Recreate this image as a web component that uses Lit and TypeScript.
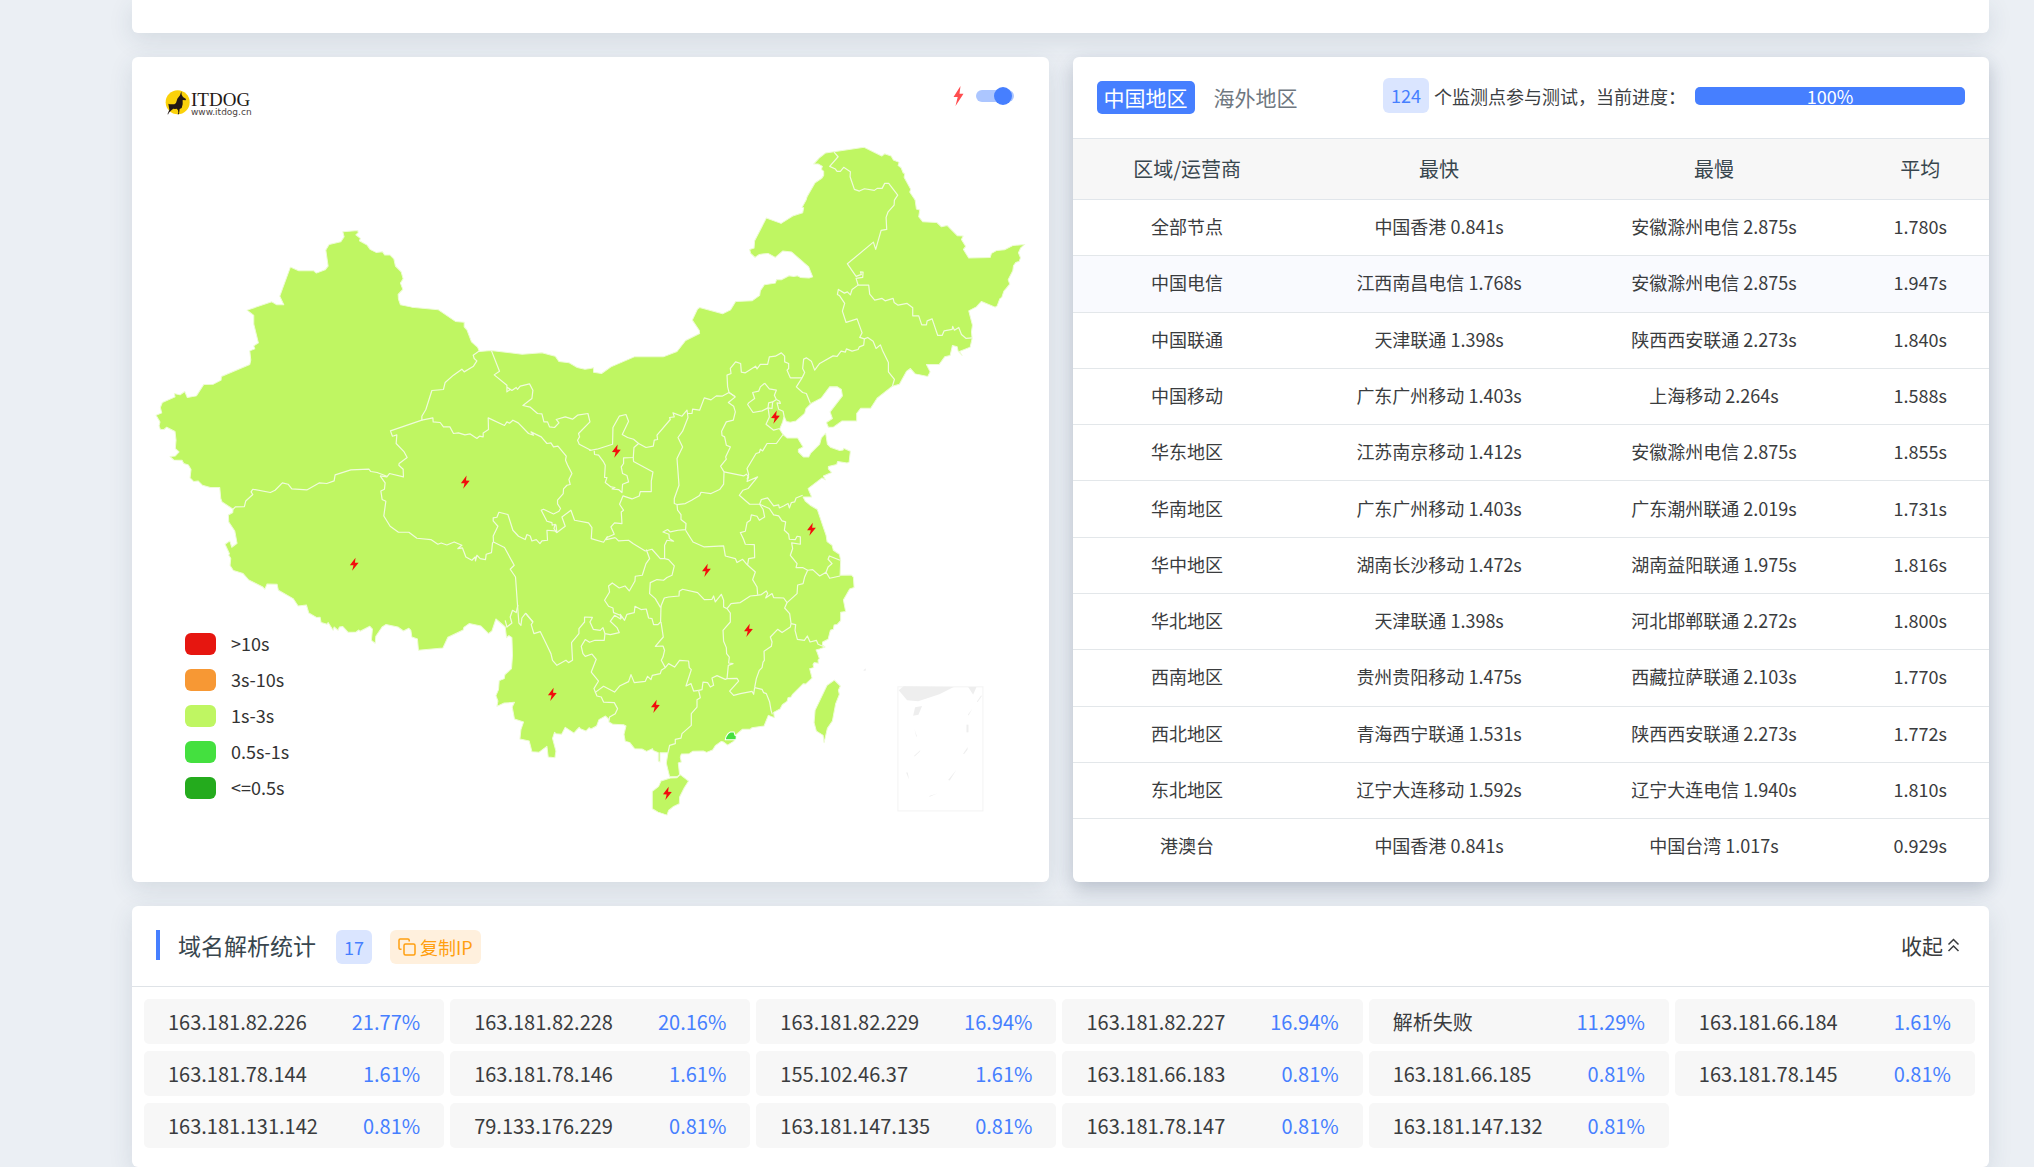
import { LitElement, html, svg, css } from "lit";
import { customElement, property, state } from "lit/decorators.js";

/* ---------- Map geometry ----------
   Survey sheets: each sheet has an origin in map units and its
   points are written in thirds of a unit, relative to that origin. */
const SHEETS = {
  A: [-2, -7],
  B: [428, 63],
  C: [198, 273],
  D: [-2, 383],
  E: [428, 383],
} as const;
type Sheet = keyof typeof SHEETS;

const place = (sheet: Sheet, points: string): string =>
  points
    .trim()
    .split(/\s+/)
    .map((pair) => {
      const [x, y] = pair.split(",").map(Number);
      const [ox, oy] = SHEETS[sheet];
      return `${(ox + x / 3).toFixed(1)},${(oy + y / 3).toFixed(1)}`;
    })
    .join(" ");

const MAINLAND = [
  place("A", `78,1095 95,1088 91,1072 97,1057 135,1040 133,1030 150,1034 164,1024 172,1042 199,1037 221,1003 250,1002 273,990 274,979
  359,943 362,930 359,902 374,896 371,887 385,878 371,822 371,796 351,780 425,755 440,764 461,764 449,738 481,651 506,662 551,662 559,669
  585,659 594,648 587,600 597,583 632,575 642,560 638,545 683,541 684,548 677,554 691,565 688,572 711,585 720,598 738,607 757,605 764,615
  780,615 791,626 796,648 813,665 819,686 811,699 818,718 804,733 805,747 811,764 845,771 925,779 976,814 1002,816 1002,830 1010,839
  1024,875 1042,891 1048,904 1082,901 1176,912 1235,908 1275,918 1286,934 1317,938 1341,952 1364,957 1380,955`),
  place("B", `100,743 100,756 124,760 152,740 222,710 309,710 350,694 376,661 418,640 417,631 396,600 411,568 418,562 487,581 511,569
  526,544 575,542 598,526 600,512 612,494 645,489 649,478 663,479 686,467 700,469 712,467 720,472 746,474 757,470 745,440 694,396 667,393
  645,412 623,400 597,403 584,412 571,400 568,388 581,384 583,362 618,294 662,310 697,288 727,278 730,263 725,262 737,240 740,230 764,188
  784,175 790,166 790,154 783,148 786,139 773,132 760,132 776,114 795,99 911,82 964,108 973,101 992,108 999,120 1016,127 1013,136 1022,143
  1028,158 1033,161 1031,172 1051,208 1048,216 1064,240 1068,267 1078,270 1075,290 1087,305 1129,307 1143,320 1160,316 1191,347 1208,348
  1203,358 1216,379 1209,388 1225,414 1289,412 1293,400 1309,391 1332,389 1358,376 1393,373 1381,383 1374,398 1380,413 1376,424 1366,427
  1359,437 1357,452 1343,479 1348,492 1330,514 1324,532 1318,536 1310,557 1304,561 1263,544 1248,560 1225,572 1236,615 1233,635 1235,655
  1229,681 1197,694 1205,706 1193,693 1190,680 1176,676 1169,706 1153,710 1136,733 1098,733 1109,755 1102,769 1064,761 1050,745 1038,754
  1017,792 996,798 950,834 931,864 901,864 889,880 889,902 845,902 820,920 804,921 798,907 816,895 809,875 846,827 843,808 831,800 808,800
  782,834 752,850 737,865 733,880 707,902 690,906 678,904 671,888 667,905 658,927 668,943 680,953 712,953 728,980 714,988 714,995 729,1010
  745,1010 751,999 778,972 783,953 796,939 801,972 810,981 838,991 848,989 850,984 870,993 866,1026 860,1028 832,1024 829,1033 804,1039
  804,1046 814,1057 789,1067`),
  place("E", `789,107 795,119 785,113 743,145 754,170 728,170 735,183 751,196 771,208 785,250 797,285 800,304 815,315 819,330 837,342
  841,360 839,405 873,404 879,411 881,442 868,446 849,479 856,514 841,516 841,541 830,553 821,554 819,567 810,570 803,597 787,605 786,614
  794,620 778,626 767,629 770,635 777,655 773,659 774,669 762,667 758,672 760,682 748,685 755,713 736,731 729,730 696,763 692,770 683,772
  680,783 666,793 659,806 640,816 642,832 624,825 611,857 575,862 569,867 546,867 525,885 525,897 520,903 502,914 490,905 483,903 465,916
  457,929 439,936 429,932 397,933 387,940 363,941 360,950 363,965 354,968 358,1003 352,1008 328,1009 318,968 323,937 299,937 299,965
  294,962 294,937 278,930 277,925 259,933 245,926 223,925 208,906 195,903 191,882 197,857 190,853 158,852 146,845 146,837 136,827 116,838
  109,857 92,866 87,862 77,872 60,865 57,861 50,868 41,878 15,861 4,882`),
  place("D", `1277,880 1273,876 1267,894 1277,932 1274,952 1254,950 1250,918 1226,936 1205,934 1197,902 1169,896 1172,868 1180,845
  1153,836 1146,800 1153,786 1122,788 1100,798 1103,782 1097,766 1105,748 1107,721 1122,715 1124,703 1144,685 1147,645 1145,592 1136,586
  1129,592 1125,560 1097,536 1085,572 1075,580 1052,557 1017,550 1001,561 999,569 953,591 938,623 865,630 862,596 845,590 842,570 836,564
  820,572 803,560 767,553 756,560 737,588 735,609 724,600 727,566 719,558 690,573 686,569 678,575 654,576 638,559 628,560 624,570 612,560
  609,570 594,547 591,552 573,547 570,531 560,532 536,518 529,494 504,497 489,475 445,450 441,432 411,431 404,447 398,440 356,419 339,400
  310,391 300,376 302,355 296,345 298,340 285,312 299,302 305,321 321,309 314,272 296,245 295,224 308,217 309,207 276,185 272,175 269,142
  241,142 217,135 204,122 191,124 180,113 183,88 175,74 161,70 156,60 131,59 120,49 136,47 147,35 136,25 138,0`),
  place("A", `135,1144 110,1131 102,1138 91,1137 87,1127 90,1115`),
].join(" ");

const HAINAN = place("E", `360,1003 385,1022 372,1042 358,1070 357,1090 340,1098 325,1110 320,1124 293,1115 276,1105 276,1053 295,1038 302,1022 330,1013 350,1012`);
const TAIWAN = place("E", `822,719 840,737 834,750 837,762 826,790 816,842 801,864 791,907 788,885 768,872 761,847 764,810 800,735`);
const HONGKONG = place("E", `495,898 497,889 503,880 510,875 521,875 524,885 528,887 527,898`);

const BORDERS: string[] = (
  [
    ["C", `448,62 429,75 432,85 440,92 430,108 402,125 395,117 370,135 345,157 340,178 305,181 287,238 275,258 275,270 181,302 187,318 200,314 198,340 222,365 231,382 207,400 206,405 219,417 220,440 178,430 170,440 150,437`],
    ["C", `275,270 308,263 309,275 330,277 340,290 359,290 370,310 385,308 404,314 420,311 440,325 448,318 459,320 459,308 475,298 474,263 523,286 530,275 538,279 548,270 564,278 595,310 610,315 602,305 633,320 650,340 662,338 670,350 683,348 708,378 706,390 712,404 725,430 716,448 720,463 710,465 700,476 699,490 682,510 682,521 691,535 686,543 670,551 640,537 633,540 650,573 665,577 666,585 675,582 671,595 680,607 677,583`],
    ["C", `680,607 674,602 650,600 652,630 635,632 629,640 618,628 605,632 600,617 590,613 585,628 565,618 548,600 533,553 506,546 500,561 489,563 489,572 503,588 489,617 490,635`],
    ["C", `150,437 165,458 163,477 152,482 156,508 167,513 161,557 180,588 205,606 236,606 260,624 302,628 323,642 333,638 350,644 372,635 395,645 383,655 397,653 407,680 425,690 435,680 436,692 440,675 450,685 466,688 468,672 484,667 487,638 490,635`],
    ["D", `309,207 316,200 343,199 347,182 368,163 363,155 368,147 421,157 435,150 457,128 474,132 485,146 530,149 567,128 590,130 612,122 615,104 662,89 716,87 722,94 741,97 770,108`],
    ["C", `490,635 523,652 552,705 540,717 556,740 562,825 566,878 572,885 575,863 586,849 608,875`],
    ["D", `1187,519 1208,545 1203,553 1211,580 1230,574 1250,615 1262,640 1267,660 1280,675 1307,660 1315,667 1327,660 1324,607 1346,580 1346,565 1363,545 1363,530 1387,531`],
    ["D", `1163,494 1158,517 1147,510 1140,530 1145,548 1130,560 1125,540`],
    ["C", `484,62 508,123 492,134 530,165 530,185 540,178 532,172 545,181 558,172 562,178 570,168 598,161 608,180 605,205 578,226 600,231 622,250 635,251 641,275 652,275 658,290 673,292 686,278 678,268 705,260 727,267 742,255 773,250 779,275 745,310 748,320 742,330 747,342 783,361`],
    ["C", `777,361 800,357 847,342 848,292 867,258 887,253 895,273 876,313 892,322 910,327 925,340 911,352 909,382 880,383 880,400 873,410 877,430 890,436 895,455 877,462 875,487 865,478 845,476 854,472 842,470 825,457 830,442 823,442 825,405 820,395 805,375 793,373 792,362`],
    ["C", `909,382 910,394 968,425 963,453 963,484 930,484 927,497 905,506 878,497 868,522 880,540 873,545 875,580 853,578 842,590 852,612 830,622 828,628 855,622`],
    ["C", `680,607 705,588 695,560 722,540 733,570 775,578 785,592 783,625 820,636 832,618`],
    ["C", `925,340 947,352 969,348 972,330 982,328 980,315 1020,268 1018,262 1032,260 1028,248 1055,258 1070,240 1073,262 1057,303 1043,322 1057,350 1040,385 1046,465 1032,505 1032,520 1040,523`],
    ["C", `1073,250 1085,250 1087,237 1108,240 1122,203 1142,209 1158,197 1175,198 1196,187`],
    ["C", `1196,187 1215,200 1194,217 1210,228 1215,245 1209,270 1188,275 1174,303 1175,316 1183,320 1188,345 1200,350 1186,380 1188,387 1171,408 1181,425 1180,462 1168,478 1142,490 1112,486 1108,496 1084,510 1065,520 1040,523`],
    ["C", `1040,523 1042,540 1052,553 1052,568 1067,580 1066,598 1043,600 1020,605 1012,598 998,605 1016,612 1017,625 1030,633 1010,630 1003,645 1003,685`],
    ["C", `855,622 865,632 895,630 908,640 945,662 965,657 990,685 1003,685 1015,688 1032,707 1025,735 1010,742 1000,750 980,748 960,757 958,790 975,805 991,832`],
    ["C", `948,658 958,685 947,700 936,735 915,738 914,752 897,782 884,767 867,773 846,758 835,767 838,785 823,810 835,828 848,833 850,847 870,855 872,864`],
    ["E", `183,535 180,522 193,540 200,522 222,517 224,498 242,508 258,506 265,533 275,535 280,553 293,553 301,545 302,498`],
    ["E", `97,531 89,545 99,567 120,570 128,562 134,580 150,583 177,577 170,562 150,543 163,525 182,537`],
    ["E", `134,580 132,600 104,600 88,606 75,598 63,618 68,640 75,648 95,641 108,657 93,695 115,722 101,745 110,767 123,770 130,785 162,787 172,805 165,820 148,830 146,840`],
    ["E", `104,757 130,738 163,755 178,737 205,724 212,703 222,727 255,723 262,708 272,718 276,705 300,700 303,690 315,682`],
    ["E", `301,500 312,473 325,470 356,467 357,453 367,447 412,457 432,478 455,477 460,467 465,485 483,462 490,480 490,500 500,505`],
    ["E", `302,545 309,590 285,618 308,617 313,630 308,650 303,660 315,682 325,670 343,680 358,660 385,662 387,682 393,688 377,737 392,730 400,752 415,750`],
    ["E", `415,750 425,748 428,725 442,727 450,740 460,735 455,713 470,706 495,717 500,715`],
    ["E", `500,505 510,518 510,545 488,570 490,603 498,622 499,640 507,650 505,668 518,670 504,675 500,715 530,714 535,722 508,752 520,765 540,760 575,753 580,762 583,742`],
    ["E", `583,742 605,747 610,757 618,760 628,785 632,810 636,822`],
    ["E", `583,742 588,715 597,690 605,682 608,665 612,660 611,633 633,618 635,605 630,590 652,567 665,577 690,560 692,550`],
    ["E", `500,505 512,490 540,487 570,467 588,465 603,463 618,452 622,460 616,473 635,460 640,472 670,473 680,487 673,503 688,520 692,550`],
    ["E", `692,550 706,553 704,570 711,597 732,600 741,587 749,605 768,600 773,612 793,620`],
    ["E", `680,487 710,460 712,434 728,430 733,410 742,390 727,382 707,382 710,370 690,345 697,325 694,308 720,312 720,290 710,288 705,298 687,297 685,282 672,270 676,245 665,242 655,227 640,224 627,205 598,192`],
    ["E", `742,390 757,388 778,407 797,396 808,414 839,407`],
    ["E", `797,396 803,380 815,370 803,357 807,347 839,360`],
    ["E", `598,192 603,178 622,173 640,197 655,194 657,203 670,197 683,190 687,203 693,187 703,185 707,173 727,165`],
    ["E", `491,95 550,107 558,102 565,110 560,124 592,110 563,145 548,150 537,165 568,192 598,192 608,207 613,230 597,240 590,228 573,224 570,240 560,247 555,273 540,277 550,298 555,312 582,313 583,352 565,355 562,373`],
    ["E", `560,118 565,103 560,85 587,40 597,37 600,27 607,32 620,10 648,10 668,-17`],
    ["E", `376,270 398,305 432,320 490,317 495,347 525,355 530,367 547,357 560,373 585,395 577,418 590,440 592,463`],
    ["E", `415,750 420,772 410,778 410,800 393,820 393,855 365,880 362,893 345,897 345,910 328,915 323,937`],
    ["B", `524,829 506,817 502,800 500,765 512,760 510,745 526,725 541,730 543,756 555,758 586,738 590,746 600,733 622,733 627,710 645,708 663,698 673,708 673,725 685,730 685,745 680,750 690,773 725,773`],
    ["B", `725,773 708,800 727,817 738,820 750,850`],
    ["B", `725,773 733,757 727,745 730,717 738,713 753,723 763,750 778,730 818,707 830,709 842,693 855,696 858,686 875,693 893,688 897,680 910,675 912,656 922,652 938,663 947,685 960,674 966,690 984,727 984,755 1002,778 996,798`],
    ["B", `912,656 898,652 905,638 890,596 857,607 846,573 853,550 838,527 831,523 834,508 852,519 861,515 870,524 875,508 893,495 925,495 928,522 943,540 965,535 974,542 998,535 1001,547 1013,555 1040,550 1057,563 1057,587 1075,587 1084,614 1098,614 1100,602 1115,596 1132,646 1145,646 1151,632 1175,628 1177,619 1182,630 1195,622 1203,643 1217,655 1235,653`],
    ["B", `893,495 887,475 907,472 908,456 900,455 903,463 887,469 861,431 939,366 946,388 962,331 979,328 977,292 983,275 1001,255 1002,240 1012,225 985,190 973,190 965,205 950,205 942,211 912,206 897,213 882,208 869,170 870,155 850,142 840,154 830,154 825,147 808,139 833,110 821,96`],
    ["B", `613,789 627,806 648,810 642,825 648,838 637,845 625,848 623,863 605,872 578,877 562,853 565,848 583,835 577,817 595,813 600,800 613,789`],
    ["B", `648,838 658,843 660,850 650,848 655,867 668,873 671,888`],
    ["B", `637,845 635,865 623,863 627,890 617,912 640,930 658,925`],
  ] as [Sheet, string][]
).map(([sheet, pts]) => place(sheet, pts));

const BOLTS: [number, number][] = [
  [643, 360], [484, 394], [222, 507], [333, 425], [420, 637],
  [679, 472], [574, 513], [616, 573], [523, 649], [535, 736],
];

const SEA_MARKS: string[] = [
  `1064,801 1085,797 1074,823 1058,826`,
  `1223,740 1248,740 1238,763`,
  `1262,765 1264,768 1252,785 1249,784`,
  `1235,806 1224,826 1223,822`,
  `1218,853 1224,853 1224,876 1218,876`,
  `1062,866 1070,889 1067,888`,
  `1080,929 1078,934 1062,949 1063,945`,
  `1222,920 1221,928 1211,941 1208,940`,
  `1037,996 1042,996 1046,1018`,
  `1188,988 1168,1020 1163,1019`,
  `1130,1059 1106,1070 1108,1066`,
  `908,690 917,684 915,692`,
].map((pts) => place("E", pts));

@customElement("china-map")
class ChinaMap extends LitElement {
  static styles = css`
    :host { display: block; }
    .map { display: block; width: 100%; height: auto; }
    .land { fill: #bff662; stroke: #eefbd6; stroke-width: 1; stroke-linejoin: round; }
    .fast { fill: #44e03f; stroke: #fff; stroke-width: 1; }
    .border { fill: none; stroke: #f0fbdc; stroke-width: 1.2; stroke-linejoin: round; }
    .bolt { fill: #f20d0d; }
    .frame { fill: none; stroke: #f3f3f3; }
    .sea { fill: #eee; }
  `;
  render() {
    return html`<svg class="map" viewBox="0 0 916 825" role="img" aria-label="中国地区">
      <polygon class="land" points=${MAINLAND} />
      <polygon class="land" points=${HAINAN} />
      <polygon class="land" points=${TAIWAN} />
      ${BORDERS.map((points) => svg`<polyline class="border" points=${points} />`)}
      <polygon class="fast" points=${HONGKONG} />
      ${BOLTS.map(
        ([x, y]) => svg`<path class="bolt" transform="translate(${x} ${y})"
          d="M1.4-6.6L-4.3 .9L-.6 1L-2 6.6L4.5-1.4L.8-1.6Z" />`,
      )}
      <rect class="frame" x="765.5" y="629.5" width="85" height="124" />
      <polygon class="sea" points=${place("E", "1030,738 1180,740 1137,762 1073,783 1040,780 1015,750")} />
      ${SEA_MARKS.map((points) => svg`<polygon class="sea" points=${points} />`)}
    </svg>`;
  }
}

const LEGEND = [
  { tone: "red", label: ">10s" },
  { tone: "orange", label: "3s-10s" },
  { tone: "lime", label: "1s-3s" },
  { tone: "green", label: "0.5s-1s" },
  { tone: "dark", label: "<=0.5s" },
];

@customElement("map-card")
class MapCard extends LitElement {
  static styles = css`
    :host { display: grid; }
    china-map, .overlay { grid-area: 1 / 1; min-width: 0; }
    .overlay {
      display: flex; flex-direction: column; justify-content: space-between;
      padding: 29px 35px 81px 33px;
    }
    .top { display: flex; justify-content: space-between; align-items: flex-start; }
    .logo { display: flex; align-items: center; text-decoration: none; color: #231815; padding-top: 2px; }
    .mark { width: 26px; height: 28px; flex: none; }
    .words { display: flex; flex-direction: column; padding-top: 3px; }
    .name { font: 19px/17px "Liberation Serif", serif; }
    .site { font: 9px/9px "DejaVu Sans", sans-serif; color: #4c4341; }
    .switch { display: flex; align-items: center; gap: 12px; height: 20px; }
    .spark { width: 11px; height: 20px; fill: #ff4d4f; }
    .toggle {
      appearance: none; margin: 0; width: 38px; height: 12px; border-radius: 6px;
      background: #c9ced6; cursor: pointer; display: flex; align-items: center;
    }
    .toggle::before {
      content: ""; width: 18px; height: 18px; flex: none; border-radius: 50%; background: #fff;
      box-shadow: 0 0 2px #777;
    }
    .toggle:checked { background: #acc6ff; justify-content: flex-end; }
    .toggle:checked::before { background: #467fff; margin-right: 2px; box-shadow: none; }
    .legend { list-style: none; margin: 0; padding: 0 0 0 20px; display: flex; flex-direction: column; gap: 9px; }
    .legend li { display: flex; align-items: center; gap: 15px; font-size: 18px; line-height: 27px; color: #333; }
    .swatch { width: 31px; height: 22px; border-radius: 6px; }
    .red { background: #e61610; }
    .orange { background: #f79834; }
    .lime { background: #bff662; }
    .green { background: #44e03f; }
    .dark { background: #24ab1d; }
  `;
  @state() private on = true;
  render() {
    return html`
      <china-map></china-map>
      <div class="overlay">
        <div class="top">
          <a class="logo" href="#">
            <svg class="mark" viewBox="0 0 78 84" aria-hidden="true">
              <circle cx="38" cy="40" r="36" fill="#fbd20a" />
              <path fill="#231815" d="M49 7L45 19L37 29L33 42L28 46L14 46L10 44L13 62L8 74L7 76L10 76L11 72L20 63L25 59L30 60L35 59L39 64L40 71L38 76L42 76L44 60L50 57L53 46L53 33L62 34L63 30L54 24L50 17Z" />
            </svg>
            <span class="words"><span class="name">ITDOG</span><span class="site">www.itdog.cn</span></span>
          </a>
          <label class="switch">
            <svg class="spark" viewBox="0 0 11 20" aria-hidden="true"><path d="M7.5 0L.5 11L4.7 11L2.5 20L10.5 7.8L6.5 7.8Z" /></svg>
            <input class="toggle" type="checkbox" role="switch" aria-label="显示标记" .checked=${this.on}
              @change=${(e: Event) => (this.on = (e.target as HTMLInputElement).checked)} />
          </label>
        </div>
        <ul class="legend">
          ${LEGEND.map((l) => html`<li><span class="swatch ${l.tone}"></span>${l.label}</li>`)}
        </ul>
      </div>`;
  }
}

const REGIONS: string[][] = [
  ["全部节点", "中国香港 0.841s", "安徽滁州电信 2.875s", "1.780s"],
  ["中国电信", "江西南昌电信 1.768s", "安徽滁州电信 2.875s", "1.947s"],
  ["中国联通", "天津联通 1.398s", "陕西西安联通 2.273s", "1.840s"],
  ["中国移动", "广东广州移动 1.403s", "上海移动 2.264s", "1.588s"],
  ["华东地区", "江苏南京移动 1.412s", "安徽滁州电信 2.875s", "1.855s"],
  ["华南地区", "广东广州移动 1.403s", "广东潮州联通 2.019s", "1.731s"],
  ["华中地区", "湖南长沙移动 1.472s", "湖南益阳联通 1.975s", "1.816s"],
  ["华北地区", "天津联通 1.398s", "河北邯郸联通 2.272s", "1.800s"],
  ["西南地区", "贵州贵阳移动 1.475s", "西藏拉萨联通 2.103s", "1.770s"],
  ["西北地区", "青海西宁联通 1.531s", "陕西西安联通 2.273s", "1.772s"],
  ["东北地区", "辽宁大连移动 1.592s", "辽宁大连电信 1.940s", "1.810s"],
  ["港澳台", "中国香港 0.841s", "中国台湾 1.017s", "0.929s"],
];

@customElement("region-card")
class RegionCard extends LitElement {
  static styles = css`
    :host { display: flex; flex-direction: column; padding-bottom: 8px; }
    .head {
      display: flex; align-items: center; justify-content: space-between;
      padding: 20px 24px 24px; border-bottom: 1px solid #e1e6eb;
    }
    .tabs { display: flex; gap: 12px; padding-top: 4px; }
    .tab {
      font: inherit; font-size: 21px; line-height: 33px; padding: 0 7px; border: 0; border-radius: 5px;
      background: none; color: #6e7780; cursor: pointer;
    }
    .tab.active { background: #467fff; color: #fff; }
    .status { display: flex; align-items: center; gap: 5px; font-size: 18px; color: #3c4043; }
    .count { background: #dae5ff; color: #467fff; font-size: 18px; line-height: 35px; border-radius: 6px; padding: 0 8px; }
    .bar { width: 270px; margin-left: 4px; border-radius: 5px; background: #e9ecef; }
    .fill { background: #467fff; color: #fff; border-radius: 5px; text-align: center; line-height: 18px; }
    table { flex: 1; width: 100%; border-collapse: collapse; table-layout: fixed; color: #3a3c3e; }
    th { height: 58px; padding: 0 0 2px; background: #f7f7f7; font-weight: 400; font-size: 20px; color: #38464e; border-bottom: 1px solid #e1e6eb; }
    td { height: 53px; padding: 0 0 2px; text-align: center; font-size: 18px; line-height: 27px; border-bottom: 1px solid #e3e7ea; }
    tbody tr:last-child td { border-bottom: 0; }
    tr.tint td { background: #f9fafe; }
    .c1 { width: 25%; }
    .c2 { width: 30%; }
    .c4 { width: 15%; }
  `;
  @state() private tab = 0;
  @property({ type: Number }) progress = 100;
  render() {
    return html`
      <div class="head">
        <div class="tabs">
          ${["中国地区", "海外地区"].map(
            (name, i) => html`<button class="tab ${i === this.tab ? "active" : ""}" @click=${() => (this.tab = i)}>${name}</button>`,
          )}
        </div>
        <div class="status">
          <span class="count">124</span>
          <span>个监测点参与测试，当前进度：</span>
          <div class="bar" role="progressbar" aria-valuenow=${this.progress}>
            <div class="fill" style="width:${this.progress}%">${this.progress}%</div>
          </div>
        </div>
      </div>
      <table>
        <thead>
          <tr><th class="c1">区域/运营商</th><th class="c2">最快</th><th class="c2">最慢</th><th class="c4">平均</th></tr>
        </thead>
        <tbody>
          ${REGIONS.map((r, i) => html`<tr class=${i === 1 ? "tint" : ""}>${r.map((c) => html`<td>${c}</td>`)}</tr>`)}
        </tbody>
      </table>`;
  }
}

const ADDRESSES: [string, string][] = [
  ["163.181.82.226", "21.77%"], ["163.181.82.228", "20.16%"], ["163.181.82.229", "16.94%"],
  ["163.181.82.227", "16.94%"], ["解析失败", "11.29%"], ["163.181.66.184", "1.61%"],
  ["163.181.78.144", "1.61%"], ["163.181.78.146", "1.61%"], ["155.102.46.37", "1.61%"],
  ["163.181.66.183", "0.81%"], ["163.181.66.185", "0.81%"], ["163.181.78.145", "0.81%"],
  ["163.181.131.142", "0.81%"], ["79.133.176.229", "0.81%"], ["163.181.147.135", "0.81%"],
  ["163.181.78.147", "0.81%"], ["163.181.147.132", "0.81%"],
];

@customElement("dns-card")
class DnsCard extends LitElement {
  static styles = css`
    :host { display: block; }
    .head { display: flex; align-items: center; padding: 24px 29px 22px 24px; border-bottom: 1px solid #dfe3e7; }
    .title { margin: 0; padding: 2px 0 6px 18px; font-size: 23px; line-height: 26px; font-weight: 400; color: #38464e; }
    .accent { width: 4px; height: 30px; background: #467fff; align-self: flex-start; }
    .badge { margin-left: 20px; background: #dae5ff; color: #467fff; font-size: 18px; line-height: 34px; padding: 0 8px; border-radius: 6px; }
    .copy {
      margin-left: 18px; font: inherit; font-size: 18px; line-height: 34px; color: #ff9f0f; background: #fff0dd;
      border: 0; border-radius: 6px; padding: 0 8px; display: flex; align-items: center; gap: 4px; cursor: pointer;
    }
    .copy svg { width: 18px; height: 18px; fill: none; stroke: #ff9f0f; stroke-width: 1.5; }
    .fold {
      margin-left: auto; font: inherit; font-size: 21px; line-height: 30px; color: #3a3c3e; background: none;
      border: 0; padding: 0 0 4px; display: flex; align-items: center; gap: 4px; cursor: pointer;
    }
    .fold svg { width: 13px; height: 14px; fill: none; stroke: #3a3c3e; stroke-width: 1.5; }
    .list {
      list-style: none; margin: 0; padding: 12px 14px 19px 12px;
      display: grid; grid-template-columns: repeat(6, 1fr); gap: 7px 6px;
    }
    .list li {
      display: flex; justify-content: space-between; background: #f7f7f7; border-radius: 5px;
      padding: 0 24px; font-size: 20px; line-height: 45px; color: #3a3c3e;
    }
    .rate { color: #467fff; }
  `;
  @state() private open = true;
  render() {
    return html`
      <div class="head">
        <span class="accent"></span>
        <h2 class="title">域名解析统计</h2>
        <span class="badge">17</span>
        <button class="copy">
          <svg viewBox="0 0 18 18" aria-hidden="true">
            <path d="M3.5 11.2H2.2Q1 11.2 1 10V2.2Q1 1 2.2 1H10Q11.2 1 11.2 2.2V3.5" />
            <rect x="6" y="6" width="11" height="11" rx="1.5" />
          </svg>复制IP
        </button>
        <button class="fold" @click=${() => (this.open = !this.open)}>
          收起<svg viewBox="0 0 13 14" aria-hidden="true"><path d="M1.5 6.5L6.5 1.5L11.5 6.5M1.5 13L6.5 8L11.5 13" /></svg>
        </button>
      </div>
      ${this.open
        ? html`<ul class="list">
            ${ADDRESSES.map(([ip, rate]) => html`<li><span>${ip}</span><span class="rate">${rate}</span></li>`)}
          </ul>`
        : null}`;
  }
}

@customElement("app-root")
class AppRoot extends LitElement {
  static styles = css`
    :host {
      display: block; min-height: 100vh; box-sizing: border-box; overflow: hidden;
      padding: 0 45px 0 132px; background: #ebeff4;
      font-family: "Noto Sans CJK SC", "Noto Sans", sans-serif;
    }
    .page { display: flex; flex-direction: column; gap: 24px; }
    .columns { display: grid; grid-template-columns: 1fr 1fr; gap: 24px; }
    .card { background: #fff; border-radius: 6px; box-shadow: 0 7px 24px rgba(40, 65, 90, 0.12); }
    .strong { box-shadow: 0 7px 24px rgba(40, 65, 110, 0.14), 0 7px 16px rgba(40, 60, 70, 0.14); }
    .previous { border-radius: 0 0 6px 6px; padding-top: 33px; }
  `;
  render() {
    return html`<main class="page">
      <section class="card previous"></section>
      <div class="columns">
        <map-card class="card"></map-card>
        <region-card class="card strong"></region-card>
      </div>
      <dns-card class="card"></dns-card>
    </main>`;
  }
}
